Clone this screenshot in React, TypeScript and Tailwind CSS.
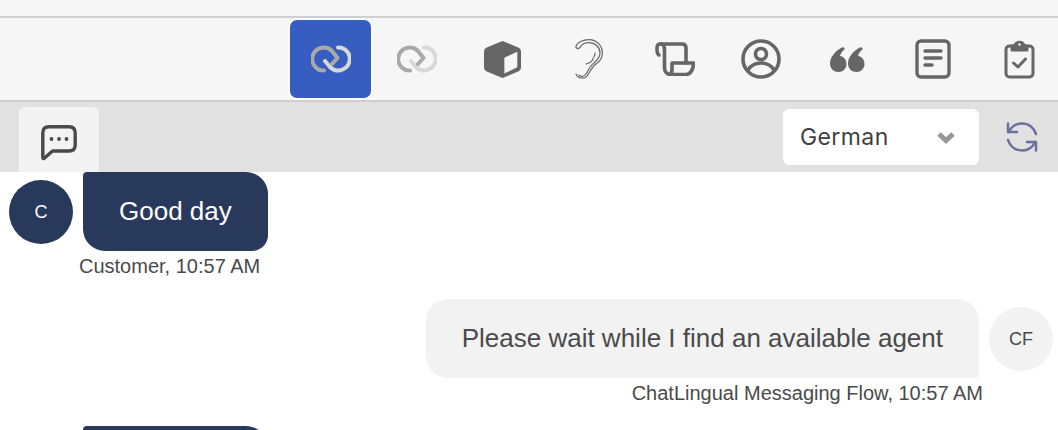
const LinkPair = ({ left, right }: { left: string; right: string }) => (
  <svg width="40" height="28" viewBox="0 0 40 28" fill="none" strokeWidth="4" strokeLinecap="round" strokeLinejoin="round">
    <path d="M27 2.5 A11.5 11.5 0 1 1 19 22 L14 16" stroke={right} />
    <path d="M13 25.5 A11.5 11.5 0 1 1 21 6 L26.5 13 L21 19" stroke={left} />
  </svg>
);

const Box = () => (
  <svg width="37" height="37" viewBox="0 0 40 40" className="-ml-[2px]">
    <path d="M20 0 L37 7 Q40 8.5 40 11 V29 Q40 31.5 37 33 L20 40 L3 33 Q0 31.5 0 29 V11 Q0 8.5 3 7 Z" fill="#666" />
    <path d="M22 18 L36 11.5 V28.5 L22 35 Z" fill="#f6f6f6" />
  </svg>
);

const Ear = () => (
  <svg width="28" height="40" viewBox="0 0 28 40" fill="none" stroke="#666" strokeWidth="1.2" strokeLinecap="round">
    <path d="M1 8 C1 4 8 0.6 14 0.6 C22 0.6 27.4 7 27.4 14 C27.4 20 24 23 21 25 C17 28 15 33 12 37 C10 40 3 40 1 35" />
    <path d="M1 8 C2 11 5 9 6 7 C8 4.5 11 3.6 14 3.6 C20 3.6 25 8 25 14 C25 19 22 21 19 24 C15 27 13 32 11 35 C9 38 5 38 4 36" />
    <path d="M11 25 C15 24 18 22 18 19 M19 18 C20 16 20 15 20 14" />
  </svg>
);

const Scroll = () => (
  <svg width="40" height="34" viewBox="0 0 40 34" fill="none" stroke="#666" strokeWidth="3.6" strokeLinecap="round" strokeLinejoin="round">
    <path d="M5 2 H27 Q31 2 31 6 V21" />
    <path d="M5 2 C2.5 2 2 4 2 7 C2 9 2 12 4 13" />
    <path d="M7 2 C9 3 9.5 5 9.5 8 V26 C9.5 30 12 32.5 16 32.5 H31 C35 32.5 38.5 28 38.5 21 H17 V27 C17 30 16 32 14 32.5" />
  </svg>
);

const Profile = () => (
  <svg width="40" height="40" viewBox="0 0 40 40" fill="none" stroke="#666" strokeWidth="3.6">
    <circle cx="20" cy="20" r="18" />
    <circle cx="20" cy="15" r="5.5" />
    <path d="M7 31 C10 26 15 24 20 24 C25 24 30 26 33 31" />
  </svg>
);

const Quote = () => (
  <svg width="35" height="25" viewBox="0 0 35 25" fill="#666">
    <path d="M13 0 C6 3 0 10 0 16.5 C0 21.5 4 25 8.5 25 C13 25 16.5 21.5 16.5 17 C16.5 12.5 13.5 9.5 10 9 C10.5 6.5 12.5 4 15 2 Z" />
    <path d="M31 0 C24 3 18 10 18 16.5 C18 21.5 22 25 26.5 25 C31 25 34.5 21.5 34.5 17 C34.5 12.5 31.5 9.5 28 9 C28.5 6.5 30.5 4 33 2 Z" />
  </svg>
);

const Doc = () => (
  <svg width="36" height="40" viewBox="0 0 36 40" fill="none" stroke="#666" strokeWidth="3.4" strokeLinecap="round">
    <rect x="2" y="2" width="32" height="36" rx="4" />
    <path d="M10 12 H26 M10 19 H26 M10 26 H17" />
  </svg>
);

const Clipboard = () => (
  <svg width="31" height="40" viewBox="0 0 31 40" fill="none" stroke="#666" strokeWidth="3" strokeLinecap="round" strokeLinejoin="round">
    <rect x="2" y="7" width="27" height="31" rx="3.5" />
    <path d="M8 7 H11 C11 2 20 2 20 7 H23 V11 H8 Z" fill="#666" />
    <circle cx="15.5" cy="5.5" r="1.2" fill="#f6f6f6" stroke="none" />
    <path d="M9.5 24 L14 28 L21.5 20" />
  </svg>
);

const Bubble = () => (
  <svg width="36" height="36" viewBox="0 0 36 36" fill="none">
    <path d="M1.8 8 Q1.8 1.8 8 1.8 H28 Q34.2 1.8 34.2 8 V20 Q34.2 26 28 26 H11.5 L3 33.5 Q1.8 34 1.8 32 Z" stroke="#4a4a4a" strokeWidth="3.4" strokeLinejoin="round" />
    <circle cx="10.5" cy="14" r="1.9" fill="#4a4a4a" />
    <circle cx="18" cy="14" r="1.9" fill="#4a4a4a" />
    <circle cx="25.5" cy="14" r="1.9" fill="#4a4a4a" />
  </svg>
);

const Refresh = () => (
  <svg width="32" height="30" viewBox="0 0 32 30" fill="none" stroke="#6a6f9e" strokeWidth="2.5" strokeLinecap="round" strokeLinejoin="round">
    <path d="M3 10 C5 5 10 1.5 16 1.5 C23 1.5 28 6 30 12" />
    <path d="M29 20 C27 25 22 28.5 16 28.5 C9 28.5 4 24 2 18" />
    <path d="M2 1.5 V10 H11" />
    <path d="M30 28.5 V20 H21" />
  </svg>
);

const TOOLS = [
  { key: 'link2', icon: <LinkPair left="#a9a9a9" right="#d8d8d8" /> },
  { key: 'box', icon: <Box /> },
  { key: 'ear', icon: <Ear /> },
  { key: 'scroll', icon: <Scroll /> },
  { key: 'profile', icon: <Profile /> },
  { key: 'quote', icon: <Quote /> },
  { key: 'doc', icon: <Doc /> },
  { key: 'clipboard', icon: <Clipboard /> },
];

export default function App() {
  return (
    <div className="w-[1058px] h-[430px] overflow-hidden bg-white font-['Liberation_Sans',sans-serif]">
      {/* Top strip */}
      <div className="h-[18px] bg-[#f6f6f6] border-b-2 border-[#cfcfcf]" />

      {/* Toolbar */}
      <div className="h-[84px] bg-[#f6f6f6] border-b-2 border-[#cfcfcf] flex justify-end items-center -mr-1">
        <div className="w-[86px] h-[82px] shrink-0">
          <button className="w-[85px] h-[82px] flex items-center justify-center bg-[#375dc1] border-2 border-white rounded-[9px]">
            <LinkPair left="#a9a9a9" right="#d8d8d8" />
          </button>
        </div>
        {TOOLS.map(t => (
          <div key={t.key} className="w-[86px] h-[82px] shrink-0 flex items-center justify-center">
            {t.icon}
          </div>
        ))}
      </div>

      {/* Tabs and language */}
      <div className="h-[70px] bg-[#e1e1e1] flex items-end pl-[19px] pr-[20px]">
        <div className="w-[80px] h-[65px] bg-[#f3f3f3] rounded-t-[6px] flex items-center justify-center pt-[7px]">
          <Bubble />
        </div>
        <div className="ml-auto self-start mt-[7px] flex items-center">
          <div className="w-[196px] h-[56px] bg-white rounded-[6px] flex items-center justify-between pl-[17px] pr-[24px] font-['Inter',sans-serif] text-[23px] tracking-[0.4px] text-[#3f3f3f]">
            <span>German</span>
            <svg width="18" height="13" viewBox="0 0 18 13" fill="none" stroke="#979797" strokeWidth="5" strokeLinejoin="miter">
              <path d="M2 3 L9 9.5 L16 3" />
            </svg>
          </div>
          <div className="ml-[27px]">
            <Refresh />
          </div>
        </div>
      </div>

      {/* Messages */}
      <div className="flex flex-col">
        <div className="flex items-start pl-[9px]">
          <div className="w-[64px] h-[64px] mt-[8px] rounded-full bg-[#29395b] text-white text-[18px] flex items-center justify-center shrink-0">C</div>
          <div className="ml-[10px] h-[79px] px-[36px] flex items-center bg-[#29395b] text-white text-[26px] rounded-tl-[4px] rounded-tr-[22px] rounded-bl-[22px] rounded-br-[16px]">Good day</div>
        </div>
        <div className="pl-[79px] mt-[3px] text-[20px] leading-[24px] text-[#4a4a4a]">Customer, 10:57 AM</div>

        <div className="flex justify-end items-start pr-[5px] mt-[21px]">
          <div className="h-[79px] px-[36px] flex items-center bg-[#f2f2f2] text-[#4a4a4a] text-[26px] rounded-tl-[22px] rounded-tr-[22px] rounded-bl-[22px] rounded-br-[4px]">Please wait while I find an available agent</div>
          <div className="w-[64px] h-[64px] mt-[8px] ml-[10px] rounded-full bg-[#f2f2f2] text-[#4a4a4a] text-[18px] flex items-center justify-center shrink-0">CF</div>
        </div>
        <div className="text-right pr-[75px] mt-[3px] text-[20px] leading-[24px] text-[#4a4a4a]">ChatLingual Messaging Flow, 10:57 AM</div>

        <div className="pl-[83px] mt-[21px]">
          <div className="w-[185px] h-[79px] bg-[#29395b] rounded-tl-[4px] rounded-tr-[22px]" />
        </div>
      </div>
    </div>
  );
}
